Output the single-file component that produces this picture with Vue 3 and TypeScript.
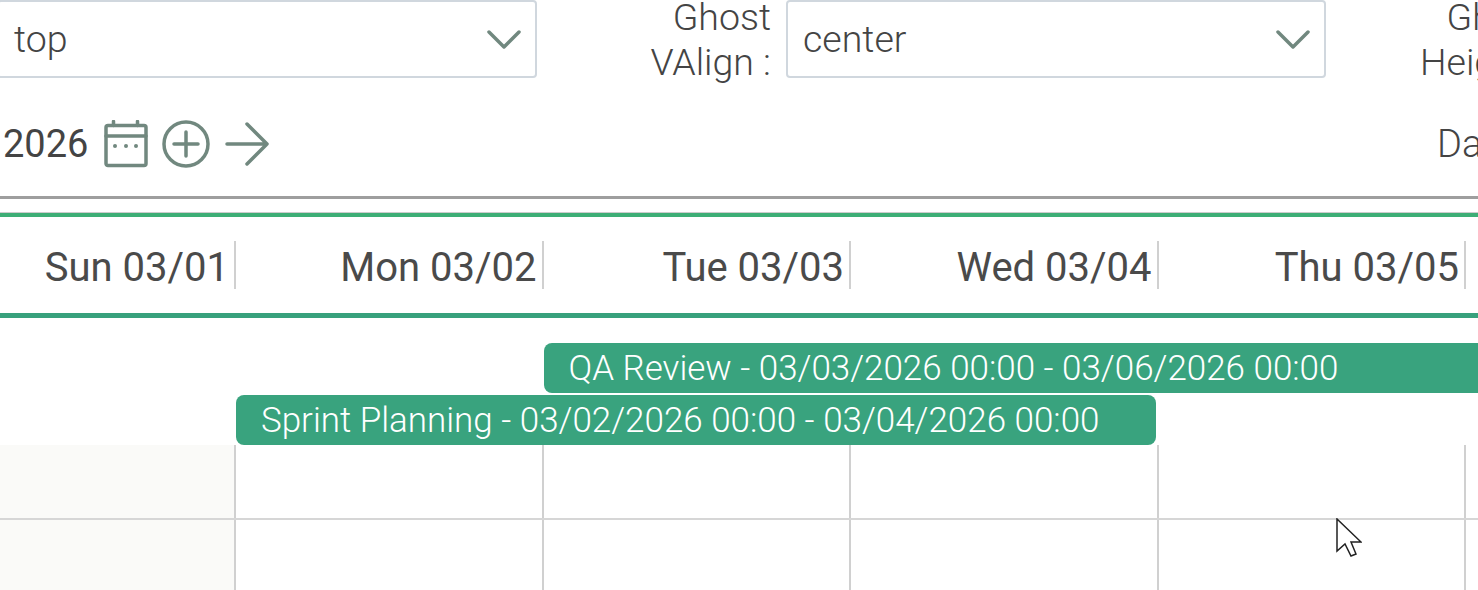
<script setup lang="ts">
interface Column {
  label: string;
}
interface CalEvent {
  id: number;
  title: string;
  start: number;
  span: number;
  last: boolean;
}

const columns: Column[] = [
  { label: 'Sun 03/01' },
  { label: 'Mon 03/02' },
  { label: 'Tue 03/03' },
  { label: 'Wed 03/04' },
  { label: 'Thu 03/05' },
];

const events: CalEvent[] = [
  { id: 1, title: 'QA Review - 03/03/2026 00:00 - 03/06/2026 00:00', start: 3, span: 4, last: true },
  { id: 2, title: 'Sprint Planning - 03/02/2026 00:00 - 03/04/2026 00:00', start: 2, span: 3, last: false },
];

const rows = [0, 1];
</script>

<template>
  <div class="page">
    <div class="controls">
      <div class="field first">
        <div class="select">
          <span>top</span>
          <svg class="chev" viewBox="0 0 34 20"><path d="M2 3l15 15L32 3" /></svg>
        </div>
      </div>
      <div class="field second">
        <label>Ghost<br />VAlign :</label>
        <div class="select">
          <span>center</span>
          <svg class="chev" viewBox="0 0 34 20"><path d="M2 3l15 15L32 3" /></svg>
        </div>
      </div>
      <div class="field third">
        <label>Ghost<br />Height :</label>
      </div>
    </div>

    <div class="toolbar">
      <span class="date">2026</span>
      <svg class="icon cal" viewBox="0 0 44 48">
        <rect x="2" y="5.500" width="40" height="40" rx="2" />
        <path d="M2 16h40M9.500 1.500v4M33.500 1.500v4" />
        <circle class="dot" cx="11" cy="26" r="2" />
        <circle class="dot" cx="22" cy="26" r="2" />
        <circle class="dot" cx="32" cy="26" r="2" />
      </svg>
      <svg class="icon plus" viewBox="0 0 48 48">
        <circle cx="24" cy="24" r="22" />
        <path d="M24 12v24M12 24h24" />
      </svg>
      <svg class="icon arrow" viewBox="0 0 44 44">
        <path d="M2 22h40M22 2l20 20-20 20" />
      </svg>
      <span class="view">Day</span>
    </div>

    <div class="rule"></div>

    <div class="header">
      <div v-for="col in columns" :key="col.label" class="head-cell">
        <span>{{ col.label }}</span>
      </div>
    </div>

    <div class="events">
      <div
        v-for="ev in events"
        :key="ev.id"
        :class="['event', { open: ev.last }]"
        :style="{ gridColumn: `${ev.start} / span ${ev.span}` }"
      >
        {{ ev.title }}
      </div>
    </div>

    <div v-for="row in rows" :key="row" class="grid-row">
      <div v-for="(col, i) in columns" :key="col.label" :class="['cell', { off: i === 0 }]"></div>
    </div>

    <svg class="cursor" viewBox="0 0 26 40" width="26" height="40">
      <path d="M1 1v32l8-7 6 12 5-2-5-12h10z" />
    </svg>
  </div>
</template>

<style scoped>
.page {
  position: relative;
  width: 1478px;
  height: 590px;
  overflow: hidden;
  background: #fff;
  font-family: Roboto, "Liberation Sans", sans-serif;
  font-weight: 300;
  color: #444;
}

.controls {
  display: flex;
  height: 78px;
}

.field {
  display: flex;
  align-items: stretch;
  flex: none;
}

.field.first {
  width: 645px;
  margin-left: -3px;
}

.field.second {
  width: 684px;
  justify-content: flex-end;
  gap: 15px;
}

.field.third {
  width: 151px;
  padding-left: 94px;
}

.select {
  box-sizing: border-box;
  width: 540px;
  height: 78px;
  display: flex;
  flex: none;
  align-items: center;
  justify-content: space-between;
  padding: 0 14px 0 15px;
  border: 2px solid #d0d7de;
  border-radius: 4px;
  font-size: 37.500px;
  background: #fff;
}

label {
  flex: none;
  font-size: 37.500px;
  line-height: 45px;
  text-align: right;
  margin-top: -5px;
  white-space: nowrap;
}

.chev {
  width: 34px;
  height: 20px;
  fill: none;
  stroke: #71887f;
  stroke-width: 3.500;
  stroke-linecap: round;
  stroke-linejoin: round;
}

.toolbar {
  display: flex;
  align-items: center;
  box-sizing: border-box;
  height: 118px;
  padding: 14px 0 0 3px;
  font-size: 38px;
}

.date {
  font-weight: 400;
  margin-right: 16px;
}

.icon {
  flex: none;
  fill: none;
  stroke: #71887f;
  stroke-width: 3.500;
  stroke-linecap: round;
  stroke-linejoin: round;
}

.icon .dot {
  fill: #71887f;
  stroke: none;
}

.cal {
  width: 44px;
  height: 48px;
  margin-right: 14px;
}

.plus {
  width: 48px;
  height: 48px;
  margin-right: 15px;
}

.arrow {
  width: 44px;
  height: 44px;
}

.view {
  margin-left: auto;
  width: 41px;
  overflow: hidden;
}

.rule {
  height: 17px;
  box-sizing: border-box;
  border-top: 3px solid #9e9e9e;
  border-bottom: 1px solid #ccc;
}

.header {
  display: grid;
  grid-template-columns: repeat(5, 307.5px);
  margin-left: -71.5px;
  height: 105px;
  box-sizing: border-box;
  border-top: 4px solid #3dae76;
  border-bottom: 5px solid #38a17c;
  align-items: center;
}

.head-cell {
  box-sizing: border-box;
  height: 48px;
  border-right: 2px solid #d0d0d0;
  display: flex;
  align-items: center;
  justify-content: flex-end;
  padding: 5px 5px 0 0;
  font-size: 40px;
  font-weight: 400;
  color: #4a4a4a;
}

.events {
  display: grid;
  grid-template-columns: repeat(6, 307.5px);
  margin-left: -71.5px;
  height: 127px;
  box-sizing: border-box;
  padding-top: 25px;
  row-gap: 2px;
  grid-auto-rows: 50px;
}

.event {
  background: #39a37e;
  color: #fff;
  font-size: 34.960px;
  line-height: 52px;
  border-radius: 8px;
  padding-left: 25px;
  margin-right: 3px;
  white-space: nowrap;
  overflow: hidden;
}

.event.open {
  border-radius: 8px 0 0 8px;
  margin-right: 0;
}

.grid-row {
  display: grid;
  grid-template-columns: repeat(5, 307.5px);
  margin-left: -71.5px;
  height: 75px;
  box-sizing: border-box;
  border-bottom: 2px solid #d6d6d6;
}

.cell {
  border-right: 2px solid #d0d0d0;
}

.cell.off {
  background: #fafaf8;
}

.cursor {
  position: absolute;
  left: 1336px;
  top: 518px;
  fill: #fff;
  stroke: #222;
  stroke-width: 1.500;
}
</style>

<style>
html,
body {
  margin: 0;
  overflow: hidden;
}
</style>
